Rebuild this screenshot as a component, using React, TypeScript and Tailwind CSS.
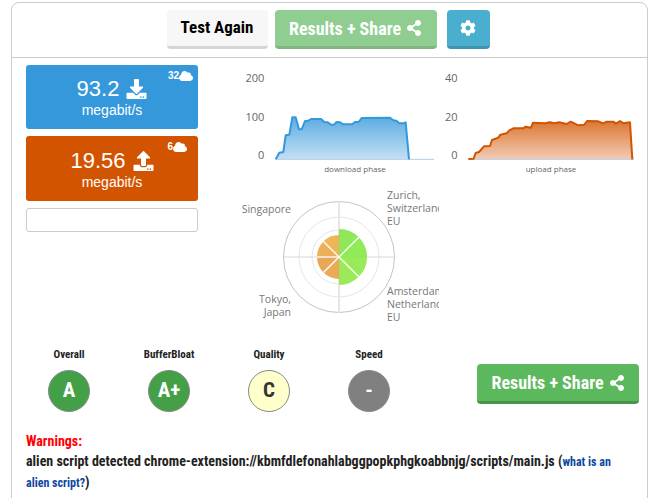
import { FaCloud, FaCog, FaDownload, FaShareAlt, FaUpload } from 'react-icons/fa';

const narrow = "font-['Roboto_Condensed','Liberation_Sans_Narrow','DejaVu_Sans_Condensed',Roboto,sans-serif]";

const downloadPts: number[][] = [
  [122, 298], [133, 278], [145, 276], [152, 226], [163, 224], [172, 172], [182, 172], [192, 208], [200, 208],
  [210, 183], [218, 183], [228, 177], [258, 177], [268, 186], [278, 187], [288, 194], [297, 194], [305, 186],
  [315, 187], [325, 193], [352, 193], [360, 186], [372, 185], [380, 174], [465, 173], [475, 181], [484, 182],
  [493, 190], [505, 190], [512, 187], [522, 298],
];

const uploadPts: number[][] = [
  [100, 297], [116, 296], [122, 279], [132, 276], [147, 259], [165, 258], [171, 240], [190, 233], [196, 224],
  [215, 220], [222, 212], [235, 205], [265, 205], [272, 200], [288, 203], [294, 188], [330, 190], [345, 187],
  [358, 190], [372, 187], [395, 192], [407, 185], [418, 190], [430, 196], [448, 194], [456, 183], [490, 184],
  [504, 190], [515, 185], [535, 185], [543, 191], [555, 183], [566, 190], [585, 187], [592, 298],
];

function PhaseChart(props: {
  id: string;
  points: number[][];
  color: string;
  labels: string[];
  caption: string;
  captionX: number;
  axisFrom: number;
  axisTo: number;
  labelX: number;
}) {
  const { id, points, color, labels, caption, captionX, axisFrom, axisTo, labelX } = props;
  // points were read off a 3x crop, svg viewBox keeps that scale
  const line = points.map((p) => p.join(',')).join(' ');
  const first = points[0];
  const last = points[points.length - 1];
  const area = `${first[0]},298 ${line} ${last[0]},298`;
  return (
    <svg viewBox="0 0 600 345" className="w-[200px] h-[115px] block">
      <defs>
        <linearGradient id={id} x1="0" y1="0" x2="0" y2="1">
          <stop offset="0" stopColor={color} stopOpacity="0.8" />
          <stop offset="1" stopColor={color} stopOpacity="0.3" />
        </linearGradient>
      </defs>
      <polygon points={area} fill={`url(#${id})`} />
      <line x1={axisFrom} y1="298" x2={axisTo} y2="298" stroke="#b5cde6" strokeWidth="3" />
      <polyline points={line} fill="none" stroke={color} strokeWidth="6" strokeLinejoin="round" />
      {labels.map((t, i) => (
        <text
          key={t}
          x={labelX}
          y={[66, 183, 296][i]}
          textAnchor="end"
          fontSize="33"
          fill="#666"
          fontFamily="'Open Sans', sans-serif"
        >
          {t}
        </text>
      ))}
      <text x={captionX} y="336" textAnchor="middle" fontSize="24" fill="#666" fontFamily="'Open Sans', sans-serif">
        {caption}
      </text>
    </svg>
  );
}

const polar = (r: number, deg: number) => {
  const a = ((deg - 90) * Math.PI) / 180;
  return [99 + r * Math.cos(a), 72 + r * Math.sin(a)];
};

const wedges = [
  { r: 28, from: 0, fill: '#86e54b' },
  { r: 28, from: 45, fill: '#88e84a' },
  { r: 28, from: 90, fill: '#90e84a' },
  { r: 28, from: 135, fill: '#95e84a' },
  { r: 22, from: 180, fill: '#e9a34a' },
  { r: 22, from: 225, fill: '#e8a04a' },
  { r: 22, from: 270, fill: '#e9a94a' },
  { r: 22, from: 315, fill: '#ebb04a' },
];

// white dividers between the wedges, the one at 90deg is not visible in the green half
const dividers = [
  [28, 45],
  [28, 135],
  [22, 225],
  [22, 270],
  [22, 315],
];

function RadarChart() {
  return (
    <svg width="199" height="146" className="block">
      {[13, 27, 40].map((r) => (
        <circle key={r} cx="99" cy="72" r={r} fill="none" stroke="#e6e6e6" strokeWidth="1" />
      ))}
      <circle cx="99" cy="72" r="55.5" fill="none" stroke="#c4c4c4" strokeWidth="1" />
      <line x1="99" y1="16" x2="99" y2="128" stroke="#e6e6e6" strokeWidth="2" />
      <line x1="43" y1="72" x2="155" y2="72" stroke="#d8d8d8" strokeWidth="1" />
      {wedges.map((w) => {
        const [x1, y1] = polar(w.r, w.from);
        const [x2, y2] = polar(w.r, w.from + 45);
        return (
          <path
            key={w.from}
            d={`M99,72 L${x1},${y1} A${w.r},${w.r} 0 0 1 ${x2},${y2} Z`}
            fill={w.fill}
            fillOpacity="0.92"
          />
        );
      })}
      {dividers.map(([r, deg]) => {
        const [x, y] = polar(r, deg);
        return <line key={deg} x1="99" y1="72" x2={x} y2={y} stroke="#fff" strokeWidth="1.3" />;
      })}
      <g fontSize="10.5" fill="#777" fontFamily="'Open Sans', sans-serif">
        <text x="51" y="28" textAnchor="end">Singapore</text>
        <text x="147" y="14">Zurich,</text>
        <text x="147" y="27">Switzerland</text>
        <text x="147" y="40">EU</text>
        <text x="51" y="118" textAnchor="end">Tokyo,</text>
        <text x="51" y="131" textAnchor="end">Japan</text>
        <text x="147" y="110">Amsterdam</text>
        <text x="147" y="123">Netherlands</text>
        <text x="147" y="136">EU</text>
      </g>
    </svg>
  );
}

function SpeedPanel(props: {
  value: string;
  bg: string;
  streams: number;
  icon: React.ReactNode;
  top: string;
  cloudRight: string;
}) {
  return (
    <div className={`relative rounded-[3px] text-white font-['Liberation_Sans',Arial,sans-serif] text-center ${props.bg}`}>
      <div className={`flex items-center justify-center gap-[7px] text-[22px] leading-[24px] ${props.top}`}>
        {props.value}
        {props.icon}
      </div>
      <div className="text-[14px] leading-[20px] mt-[-1px] pb-[9px]">megabit/s</div>
      <div className={`absolute top-[4px] flex items-center text-[10px] font-bold leading-[14px] ${props.cloudRight}`}>
        {props.streams}
        <FaCloud className="w-[14px] h-[12px]" />
      </div>
    </div>
  );
}

function Grade(props: { title: string; grade: string; circle: string }) {
  return (
    <div className="w-[100px] flex flex-col items-center">
      <div className={`text-[11px] font-bold leading-[14px] text-[#222] ${narrow}`}>{props.title}</div>
      <div
        className={`mt-[8px] w-[42px] h-[42px] rounded-full border border-[#888] flex items-center justify-center text-[21px] font-bold ${narrow} ${props.circle}`}
      >
        {props.grade}
      </div>
    </div>
  );
}

export default function App() {
  return (
    <div className="h-[498px] overflow-hidden bg-white pt-[2px] pl-[11px] pr-[14px]">
      <div className="h-[520px] border border-[#ccc] rounded-t-[8px]">
        {/* top buttons */}
        <div className={`h-[55px] border-b border-[#ccc] flex justify-center items-start pt-[7px] pr-[3px] ${narrow}`}>
          <button className="w-[101px] h-[39px] rounded-[4px] bg-[#f7f7f7] border-b-[3px] border-[#d5d5d5] text-[17px] font-bold text-black">
            Test Again
          </button>
          <button className="ml-[7px] w-[162px] h-[39px] rounded-[4px] bg-[#8fce90] border-b-[3px] border-[#82b583] text-[18px] font-bold text-white flex items-center justify-center gap-[5px]">
            Results + Share
            <FaShareAlt className="w-[16px] h-[16px]" />
          </button>
          <button className="ml-[10px] w-[43px] h-[39px] rounded-[4px] bg-[#4aafcf] border-b-[3px] border-[#3f94ae] text-white flex items-center justify-center">
            <FaCog className="w-[16px] h-[16px]" />
          </button>
        </div>

        <div className="flex">
          <div className="ml-[14px] mt-[7px] w-[172px] flex flex-col gap-[7px]">
            <SpeedPanel
              value="93.2"
              bg="bg-[#3498db]"
              streams={32}
              top="pt-[12px]"
              cloudRight="right-[5px]"
              icon={<FaDownload className="w-[21px] h-[20px]" />}
            />
            <SpeedPanel
              value="19.56"
              bg="bg-[#d35400]"
              streams={6}
              top="pt-[13px]"
              cloudRight="right-[11px]"
              icon={<FaUpload className="w-[21px] h-[20px]" />}
            />
            <div className="h-[24px] rounded-[3px] border border-[#ccc]" />
          </div>

          <div className="ml-[37px] mt-[2px]">
            <div className="flex">
              <PhaseChart
                id="dl"
                points={downloadPts}
                color="#3498db"
                labels={['200', '100', '0']}
                caption="download phase"
                captionX={360}
                axisFrom={122}
                axisTo={597}
                labelX={88}
              />
              <PhaseChart
                id="ul"
                points={uploadPts}
                color="#d35400"
                labels={['40', '20', '0']}
                caption="upload phase"
                captionX={348}
                axisFrom={100}
                axisTo={597}
                labelX={68}
              />
            </div>
            <div className="mt-[10px] ml-[5px]">
              <RadarChart />
            </div>
          </div>
        </div>

        {/* grades */}
        <div className="flex items-start mt-[17px] pl-[7px]">
          <Grade title="Overall" grade="A" circle="bg-[#43a047] text-white" />
          <Grade title="BufferBloat" grade="A+" circle="bg-[#43a047] text-white" />
          <Grade title="Quality" grade="C" circle="bg-[#ffffcc] text-[#333]" />
          <Grade title="Speed" grade="-" circle="bg-[#808080] text-white" />
          <button
            className={`ml-[58px] mt-[16px] w-[162px] h-[40px] rounded-[4px] bg-[#5cb85c] border-b-[3px] border-[#4a934a] text-[18px] font-bold text-white flex items-center justify-center gap-[5px] ${narrow}`}
          >
            Results + Share
            <FaShareAlt className="w-[16px] h-[16px]" />
          </button>
        </div>

        {/* warnings */}
        <div className={`mt-[19px] ml-[14px] w-[590px] text-[14px] font-bold leading-[20px] text-[#222] ${narrow}`}>
          <div className="text-[#f00]">Warnings:</div>
          <div>
            alien script detected chrome-extension://kbmfdlefonahlabggpopkphgkoabbnjg/scripts/main.js (
            <a className="text-[#0d47a1] text-[12px]">what is an alien script?</a>)
          </div>
        </div>
      </div>
    </div>
  );
}
